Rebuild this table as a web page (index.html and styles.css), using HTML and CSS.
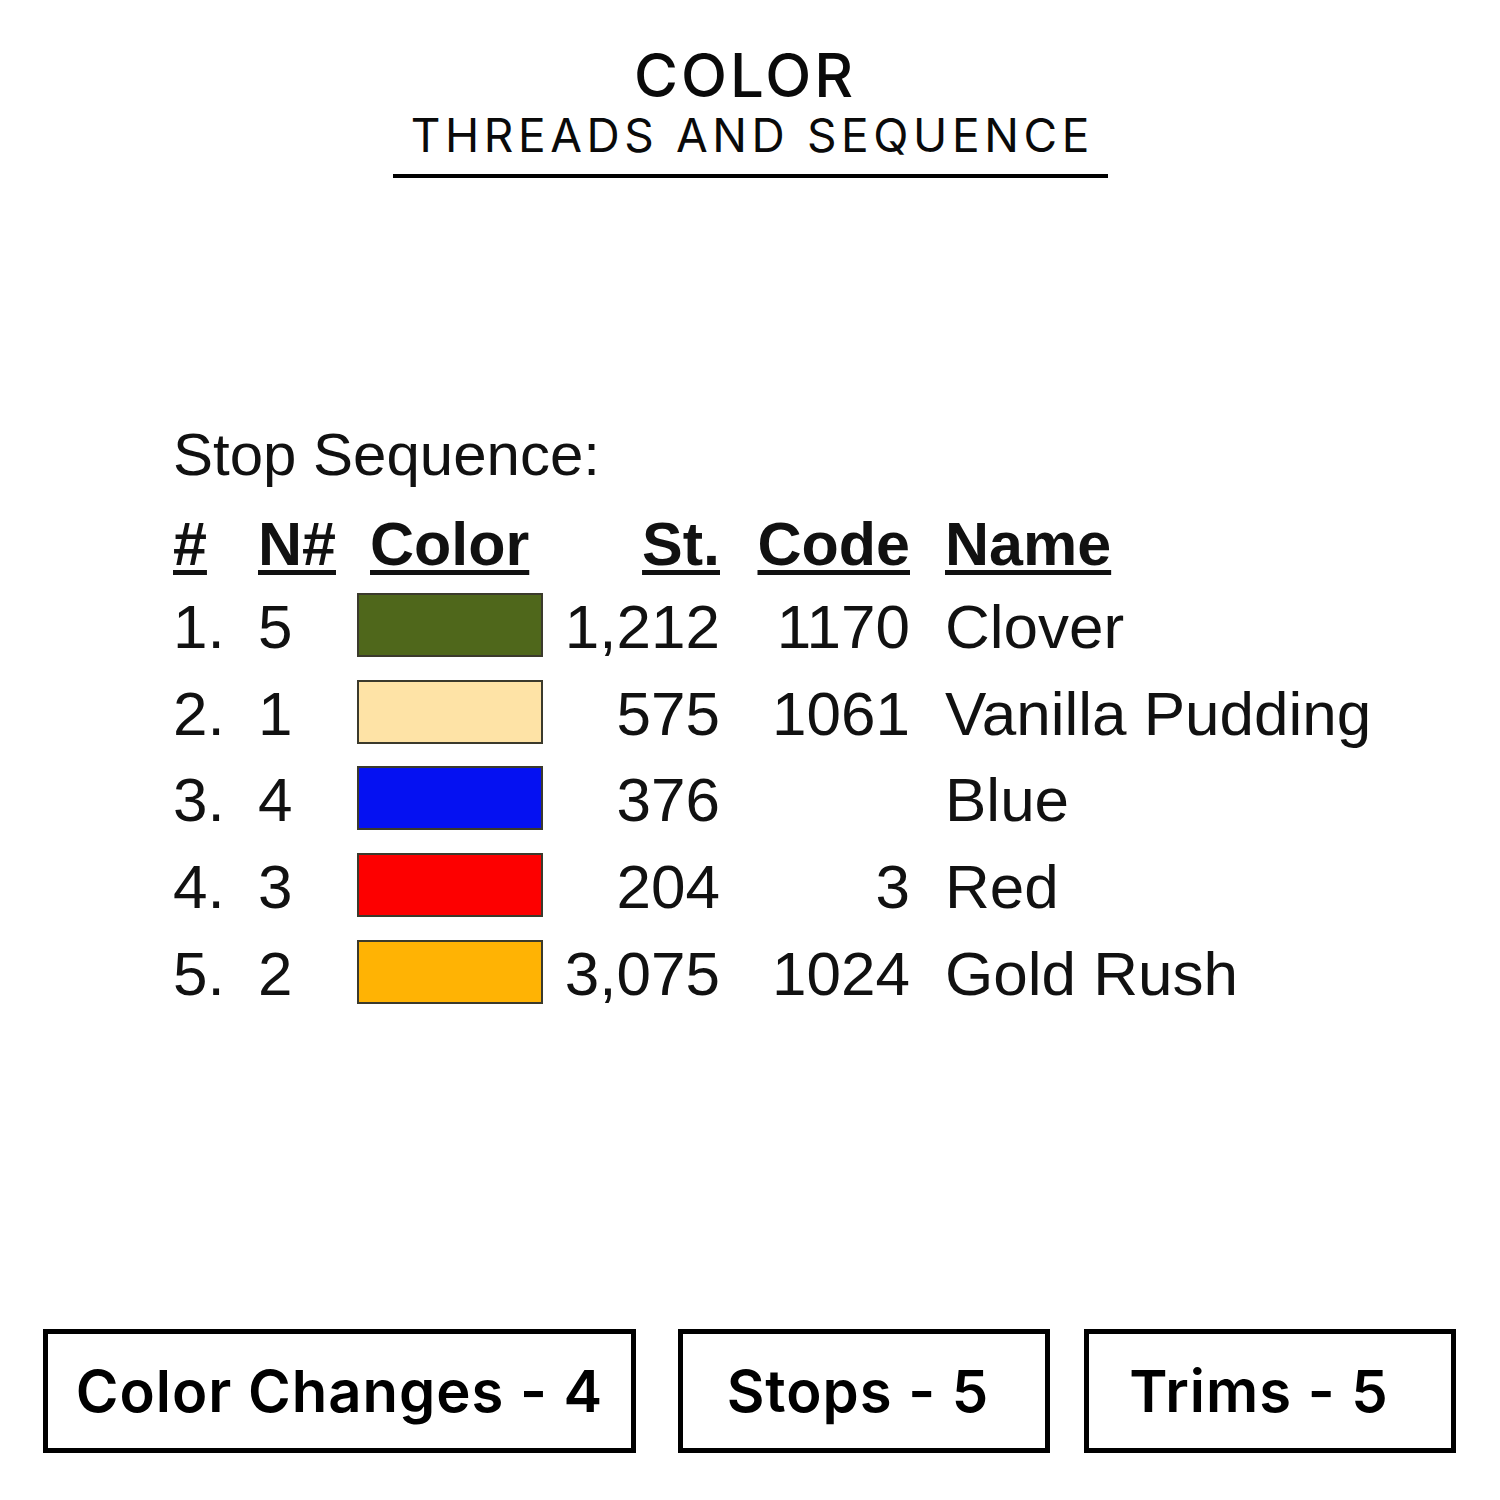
FILE: index.html
```html
<!DOCTYPE html>
<html lang="en">
<head>
<meta charset="utf-8">
<title>Color Threads and Sequence</title>
<link rel="stylesheet" href="styles.css">
</head>
<body>
<div class="page">
  <header class="title-wrap">
    <div class="heading">
      <div class="title">COLOR</div>
      <div class="subtitle">THREADS AND SEQUENCE</div>
    </div>
  </header>

  <section class="sequence">
    <div class="seq-title">Stop Sequence:</div>
    <div class="seq-grid">
      <div class="th"><span>#</span></div>
      <div class="th"><span>N#</span></div>
      <div class="th th-color"><span>Color</span></div>
      <div class="th num"><span>St.</span></div>
      <div class="th num"><span>Code</span></div>
      <div class="th name"><span>Name</span></div>

      <div class="td">1.</div><div class="td">5</div>
      <div class="td"><div class="swatch sw-green"></div></div>
      <div class="td num">1,212</div><div class="td num">1170</div><div class="td name">Clover</div>

      <div class="td">2.</div><div class="td">1</div>
      <div class="td"><div class="swatch sw-vanilla"></div></div>
      <div class="td num">575</div><div class="td num">1061</div><div class="td name">Vanilla Pudding</div>

      <div class="td">3.</div><div class="td">4</div>
      <div class="td"><div class="swatch sw-blue"></div></div>
      <div class="td num">376</div><div class="td num"></div><div class="td name">Blue</div>

      <div class="td">4.</div><div class="td">3</div>
      <div class="td"><div class="swatch sw-red"></div></div>
      <div class="td num">204</div><div class="td num">3</div><div class="td name">Red</div>

      <div class="td">5.</div><div class="td">2</div>
      <div class="td"><div class="swatch sw-gold"></div></div>
      <div class="td num">3,075</div><div class="td num">1024</div><div class="td name">Gold Rush</div>
    </div>
  </section>

  <footer class="stats">
    <div class="stat stat-wide">Color Changes - 4</div>
    <div class="stat stat-mid">Stops - 5</div>
    <div class="stat stat-last">Trims - 5</div>
  </footer>
</div>
</body>
</html>
```

FILE: styles.css
```css
* { box-sizing: border-box; }

html, body {
  margin: 0;
  padding: 0;
  background: #ffffff;
}

.page {
  width: 1500px;
  height: 1500px;
  display: flex;
  flex-direction: column;
  color: #000;
}

/* ---------- Title ---------- */
.title-wrap {
  display: flex;
  justify-content: center;
  padding-top: 42px;
}

.heading {
  width: 715px;
  border-bottom: 4px solid #000;
  padding-bottom: 14px;
  text-align: center;
  font-family: Inter, "Open Sans", sans-serif;
  color: #0a0a0a;
}

.title {
  font-size: 60px;
  font-weight: 500;
  line-height: 66px;
  letter-spacing: 3px;
  text-indent: -10px;
}

.subtitle {
  margin-top: 2px;
  font-size: 46px;
  font-weight: 400;
  line-height: 50px;
  letter-spacing: 4.6px;
  text-indent: 4.6px;
}

/* ---------- Sequence table ---------- */
.sequence {
  padding-left: 173px;
  padding-top: 242px;
  font-family: "Liberation Sans", Arial, sans-serif;
  color: #111;
}

.seq-title {
  font-size: 60px;
  line-height: 70px;
}

.seq-grid {
  margin-top: 14px;
  display: grid;
  grid-template-columns: 85px 99px 186px 177px 190px auto;
  grid-auto-rows: 86.7px;
  grid-template-rows: 80px;
}

.th {
  font-size: 61px;
  font-weight: 700;
  line-height: 80px;
  white-space: nowrap;
}

.th span {
  text-decoration: underline;
  text-decoration-thickness: 5px;
  text-underline-offset: 5px;
}

.th-color { padding-left: 13px; }

.td {
  font-size: 62px;
  line-height: 86.7px;
  white-space: nowrap;
}

.num { text-align: right; }
.name { padding-left: 35px; }

.swatch {
  margin-top: 9px;
  width: 186px;
  height: 64px;
  border: 2px solid #3b3a2c;
}

.sw-green   { background: #4f671b; }
.sw-vanilla { background: #fee3a6; }
.sw-blue    { background: #0511f2; }
.sw-red     { background: #fd0000; }
.sw-gold    { background: #ffb304; }

/* ---------- Stats boxes ---------- */
.stats {
  margin-top: auto;
  margin-bottom: 47px;
  padding-left: 43px;
  display: flex;
  column-gap: 34px;
}

.stat {
  width: 372px;
  height: 124px;
  border: 5px solid #000;
  display: flex;
  align-items: center;
  justify-content: center;
  font-family: Inter, "Open Sans", sans-serif;
  font-weight: 600;
  font-size: 58px;
  letter-spacing: 1px;
  color: #000;
}

.stat-wide {
  width: 593px;
  margin-right: 8px;
}

.stat-mid {
  padding-right: 12px;
}

.stat-last {
  padding-right: 22px;
}
```
